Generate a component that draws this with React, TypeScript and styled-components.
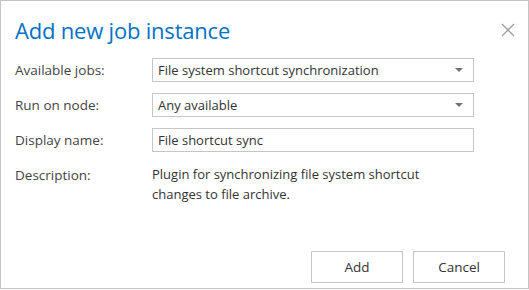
import React from "react";
import styled, { createGlobalStyle } from "styled-components";

const GlobalStyle = createGlobalStyle`
  html, body {
    margin: 0;
    padding: 0;
    background: #ffffff;
  }
  body {
    font-family: "Open Sans", "Noto Sans", sans-serif;
  }
`;

const Dialog = styled.div`
  width: 529px;
  height: 289px;
  box-sizing: border-box;
  border: 1px solid #c4c4c4;
  background: #ffffff;
  display: flex;
  flex-direction: column;
`;

const Header = styled.div`
  display: flex;
  align-items: center;
  justify-content: space-between;
  padding: 10px 11px 0 14px;
  height: 38px;
`;

const Title = styled.h1`
  margin: 0;
  font-size: 22px;
  font-weight: 400;
  color: #0072c6;
  letter-spacing: -0.2px;
`;

const CloseButton = styled.button`
  width: 18px;
  height: 18px;
  padding: 0;
  border: none;
  background: transparent;
  display: flex;
  align-items: center;
  justify-content: center;
  cursor: pointer;
`;

const Form = styled.div`
  display: grid;
  grid-template-columns: 137px 322px;
  row-gap: 11px;
  padding: 9px 0 0 14px;
  font-size: 13.5px;
  color: #444444;
`;

const Label = styled.div`
  display: flex;
  align-items: center;
  height: 24px;
`;

const Field = styled.div`
  height: 24px;
  box-sizing: border-box;
  border: 1px solid #c6c6c6;
  padding: 0 10px 0 5px;
  display: flex;
  align-items: center;
  justify-content: space-between;
  font-size: 13px;
  color: #333333;
`;

const Arrow = styled.span`
  width: 0;
  height: 0;
  border-left: 4px solid transparent;
  border-right: 4px solid transparent;
  border-top: 4px solid #707070;
`;

const Description = styled.div`
  line-height: 20px;
  font-size: 13px;
  color: #333333;
  padding-top: 1px;
  width: 290px;
`;

const Footer = styled.div`
  margin-top: auto;
  display: flex;
  justify-content: flex-end;
  gap: 10px;
  padding: 0 23px 5px 0;
`;

const Button = styled.button`
  width: 92px;
  height: 32px;
  box-sizing: border-box;
  border: 1px solid #c6c6c6;
  background: #ffffff;
  font-family: inherit;
  font-size: 13.5px;
  color: #333333;
  cursor: pointer;
`;

export default function App(): React.JSX.Element {
  return (
    <>
      <GlobalStyle />
      <Dialog>
        <Header>
          <Title>Add new job instance</Title>
          <CloseButton aria-label="Close">
            <svg width="14" height="14" viewBox="0 0 14 14">
              <path d="M1 1 L13 13 M13 1 L1 13" stroke="#a0a0a0" strokeWidth="1.4" />
            </svg>
          </CloseButton>
        </Header>
        <Form>
          <Label>Available jobs:</Label>
          <Field>
            <span>File system shortcut synchronization</span>
            <Arrow />
          </Field>
          <Label>Run on node:</Label>
          <Field>
            <span>Any available</span>
            <Arrow />
          </Field>
          <Label>Display name:</Label>
          <Field>
            <span>File shortcut sync</span>
          </Field>
          <Label>Description:</Label>
          <Description>
            Plugin for synchronizing file system shortcut changes to file
            archive.
          </Description>
        </Form>
        <Footer>
          <Button>Add</Button>
          <Button>Cancel</Button>
        </Footer>
      </Dialog>
    </>
  );
}
